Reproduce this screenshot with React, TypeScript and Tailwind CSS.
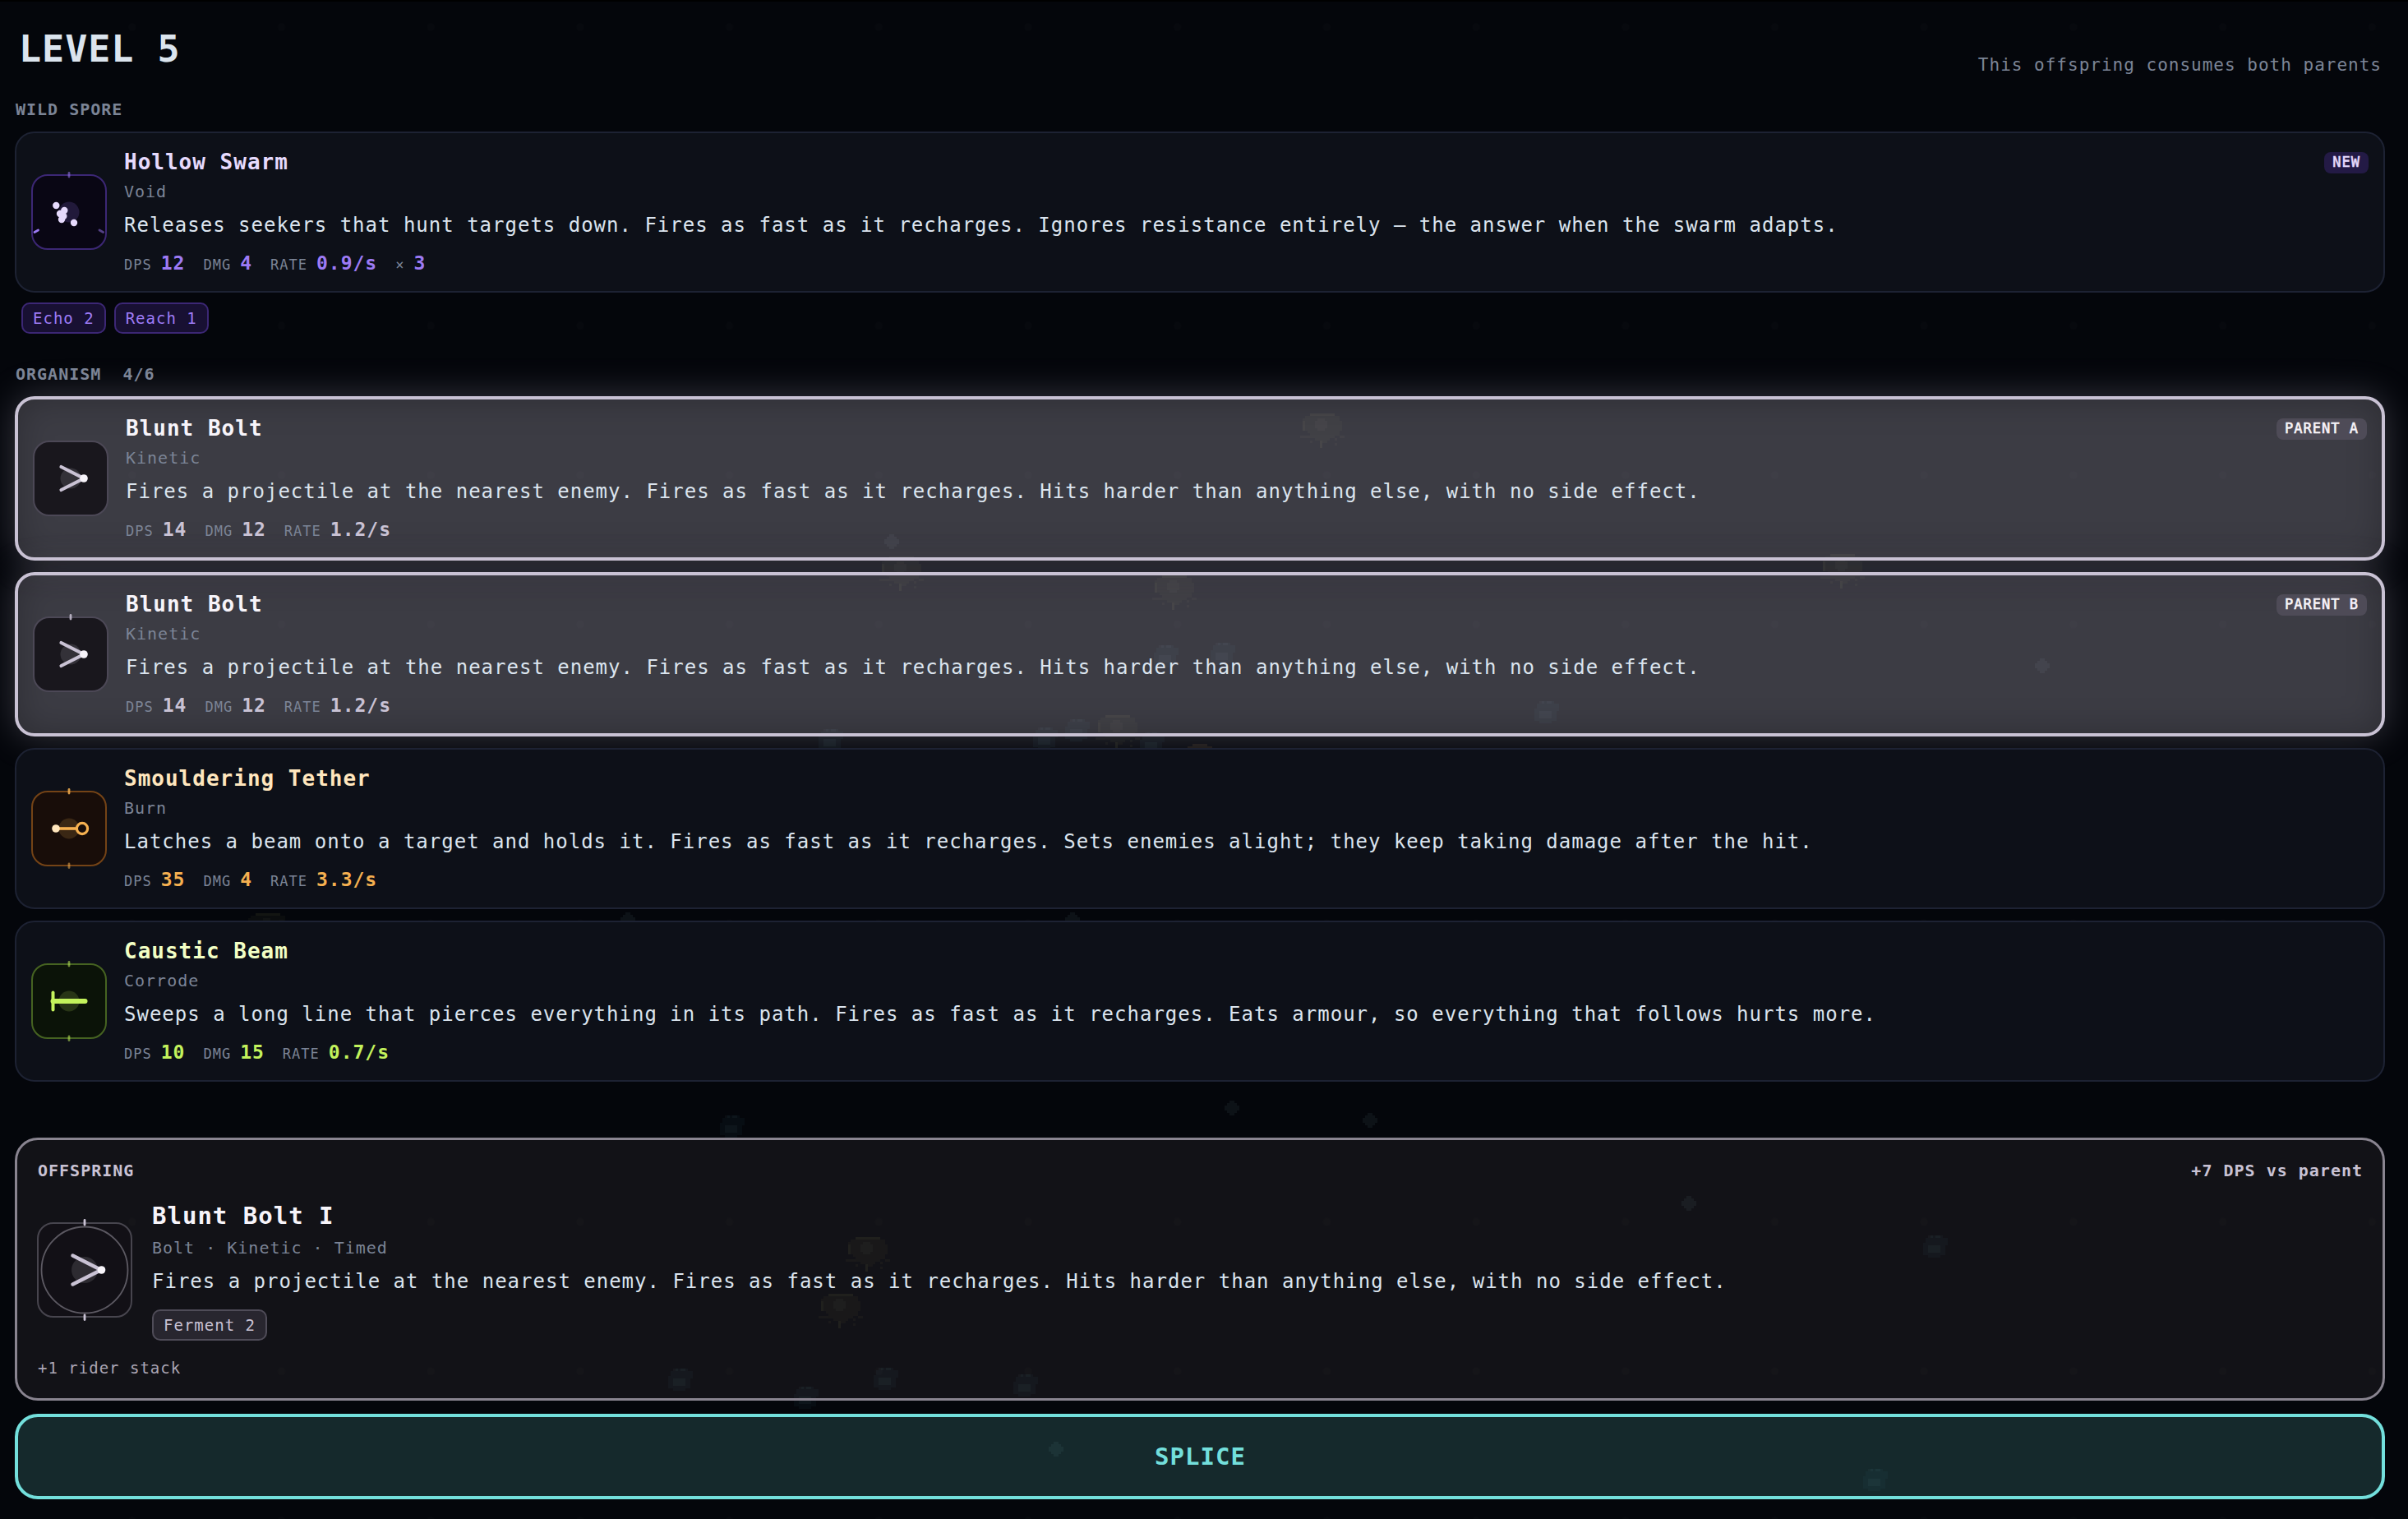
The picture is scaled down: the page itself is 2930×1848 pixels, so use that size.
import type { ReactNode } from "react"
import clsx from "clsx"

type Theme = "void" | "kinetic" | "burn" | "corrode"

interface Stat {
  label: string
  value: string
}

interface Cell {
  name: string
  theme: Theme
  element: string
  text: string
  stats: Stat[]
  badge?: string
  selected?: boolean
  ticks?: number
}

const themes: Record<Theme, { title: string; value: string; badge: string; edge: string; fill: string; core: string; bright: string; main: string }> = {
  void: {
    title: "text-[#e6dafd]",
    value: "text-[#9d7bf5]",
    badge: "bg-[#231a45] text-[#e6dafd]",
    edge: "#3c2775",
    fill: "#090614",
    core: "#21193a",
    bright: "#e6dafd",
    main: "#9d7bf5",
  },
  kinetic: {
    title: "text-[#f7f4fa]",
    value: "text-[#c9c2d4]",
    badge: "bg-[#4e4b57] text-[#f7f4fa]",
    edge: "#4c4856",
    fill: "#19171d",
    core: "#333138",
    bright: "#f7f4fa",
    main: "#c9c2d4",
  },
  burn: {
    title: "text-[#ffe6bd]",
    value: "text-[#f5b050]",
    badge: "bg-[#3b2714] text-[#ffe6bd]",
    edge: "#744316",
    fill: "#180d09",
    core: "#3a2714",
    bright: "#ffe6bd",
    main: "#f5b050",
  },
  corrode: {
    title: "text-[#f2ffc4]",
    value: "text-[#c3f25c]",
    badge: "bg-[#28351a] text-[#f2ffc4]",
    edge: "#466321",
    fill: "#0b1308",
    core: "#283516",
    bright: "#f2ffc4",
    main: "#c3f25c",
  },
}

const wildSpore: Cell = {
  name: "Hollow Swarm",
  theme: "void",
  element: "Void",
  text: "Releases seekers that hunt targets down. Fires as fast as it recharges. Ignores resistance entirely — the answer when the swarm adapts.",
  stats: [
    { label: "DPS", value: "12" },
    { label: "DMG", value: "4" },
    { label: "RATE", value: "0.9/s" },
    { label: "×", value: "3" },
  ],
  badge: "NEW",
}

const boltText =
  "Fires a projectile at the nearest enemy. Fires as fast as it recharges. Hits harder than anything else, with no side effect."

const boltStats: Stat[] = [
  { label: "DPS", value: "14" },
  { label: "DMG", value: "12" },
  { label: "RATE", value: "1.2/s" },
]

const organism: Cell[] = [
  { name: "Blunt Bolt", theme: "kinetic", element: "Kinetic", text: boltText, stats: boltStats, badge: "PARENT A", selected: true, ticks: 0 },
  { name: "Blunt Bolt", theme: "kinetic", element: "Kinetic", text: boltText, stats: boltStats, badge: "PARENT B", selected: true, ticks: 1 },
  {
    name: "Smouldering Tether",
    theme: "burn",
    element: "Burn",
    text: "Latches a beam onto a target and holds it. Fires as fast as it recharges. Sets enemies alight; they keep taking damage after the hit.",
    stats: [
      { label: "DPS", value: "35" },
      { label: "DMG", value: "4" },
      { label: "RATE", value: "3.3/s" },
    ],
    ticks: 2,
  },
  {
    name: "Caustic Beam",
    theme: "corrode",
    element: "Corrode",
    text: "Sweeps a long line that pierces everything in its path. Fires as fast as it recharges. Eats armour, so everything that follows hurts more.",
    stats: [
      { label: "DPS", value: "10" },
      { label: "DMG", value: "15" },
      { label: "RATE", value: "0.7/s" },
    ],
    ticks: 2,
  },
]

// dim creatures drifting on the playfield behind the overlay: x, y, kind
const creatures: [number, number, string][] = [
  [1609, 517, "jelly"],
  [1097, 691, "jelly"],
  [1429, 714, "jelly"],
  [2242, 688, "jelly"],
  [1360, 884, "jelly"],
  [1056, 1519, "jelly"],
  [1023, 1588, "jelly"],
  [326, 1125, "jelly"],
  [1460, 915, "ember"],
  [1419, 798, "mite"],
  [1488, 795, "mite"],
  [1011, 900, "mite"],
  [1272, 898, "mite"],
  [1311, 888, "mite"],
  [1402, 904, "mite"],
  [1882, 866, "mite"],
  [891, 1370, "mite"],
  [2355, 1516, "mite"],
  [1078, 1677, "mite"],
  [828, 1678, "mite"],
  [1248, 1685, "mite"],
  [981, 1700, "mite"],
  [2282, 1800, "mite"],
  [2485, 808, "gem"],
  [1085, 657, "gem"],
  [764, 1117, "gem"],
  [1305, 1117, "gem"],
  [1499, 1346, "gem"],
  [1667, 1361, "gem"],
  [2055, 1462, "gem"],
  [1285, 1761, "gem"],
]

function Playfield() {
  return (
    <svg className="pointer-events-none absolute inset-0 h-full w-full" aria-hidden="true">
      <defs>
        <pattern id="grid" x="70" y="-60" width="181.7" height="181.7" patternUnits="userSpaceOnUse">
          <circle cx="90.85" cy="90.85" r="4.5" fill="#07090e" />
        </pattern>
        <g id="jelly" shapeRendering="crispEdges">
          <path fill="#96a050" opacity=".05" d="M-15-16h30v3h6v6h3v12h-3v6h-6v3h-6v3h-3v3h-6v6h-3v-9h-6v-3h-6v-6h-3v-3h-6v-15h3v-3h6z" />
          <path fill="#96a050" opacity=".06" d="M-15-16h30v3h-30zM-24-7h3v12h-3zM-27 11h12v3h-12zM21 11h6v3h-6zM-15 17h3v3h-3zM-3 17h3v9h-3zM15 14h3v3h-3zM15 20h3v3h-3z" />
          <path fill="#b4aaa0" opacity=".04" d="M-6-10h9v3h3v9h-3v3h-9v-3h-3v-9h3z" />
        </g>
        <path id="ember" fill="#b48c50" opacity=".11" shapeRendering="crispEdges" d="M-9-12h18v3h6v6h3v9h-36v-9h3v-6h6z" />
        <g id="mite" shapeRendering="crispEdges">
          <path fill="#3c7884" opacity=".07" d="M-6-15h15v3h6v9h-3v12h-6v3h-15v-3h-6v-15h3v-6h6z" />
          <path fill="#8cb4b4" opacity=".05" d="M-9-3h15v9h-15zM-9-15h6v3h-6zM0-15h6v3h-6z" />
        </g>
        <path id="gem" fill="#6a9090" opacity=".09" shapeRendering="crispEdges" d="M-3-9h6v3h3v3h3v6h-3v3h-3v3h-6v-3h-3v-3h-3v-6h3v-3h3z" />
      </defs>
      <rect width="100%" height="100%" fill="url(#grid)" />
      {creatures.map(([x, y, kind]) => (
        <use key={`${x}-${y}`} href={`#${kind}`} x={x} y={y} />
      ))}
    </svg>
  )
}

function GlyphShape({ theme }: { theme: Theme }) {
  const { main, bright, fill } = themes[theme]

  if (theme === "void") {
    return (
      <g fill={bright}>
        <circle cx="30.3" cy="38" r="4.2" />
        <circle cx="40.3" cy="44" r="4.2" />
        <circle cx="35" cy="48" r="4.2" />
        <circle cx="39.3" cy="51" r="4.2" />
        <circle cx="37" cy="55" r="4.2" />
        <circle cx="52" cy="59" r="4.2" />
      </g>
    )
  }
  if (theme === "kinetic") {
    return (
      <>
        <path d="M34.5 32 62 46 34.5 60" fill="none" stroke={main} strokeWidth="4.2" strokeLinecap="round" />
        <circle cx="62" cy="46" r="4.8" fill={bright} />
      </>
    )
  }
  if (theme === "burn") {
    return (
      <>
        <path d="M30 46h27" stroke={main} strokeWidth="3.6" />
        <circle cx="30" cy="46" r="4.8" fill={bright} />
        <circle cx="62" cy="46" r="6.6" fill={fill} stroke={main} strokeWidth="3.2" />
      </>
    )
  }
  return (
    <g stroke={main} strokeLinecap="round">
      <path d="M26.5 46h39" strokeWidth="6" />
      <path d="M26.5 35.5v21" strokeWidth="4" />
    </g>
  )
}

function Glyph({ theme, ticks }: { theme: Theme; ticks?: number }) {
  const { edge, fill, core, main } = themes[theme]
  return (
    <svg viewBox="0 0 92 92" className="size-[92px] shrink-0 overflow-visible">
      <rect x="1" y="1" width="90" height="90" rx="19" fill={fill} stroke={edge} strokeWidth="2" />
      <circle cx="46" cy="46" r="12.5" fill={core} />
      <GlyphShape theme={theme} />
      <g stroke={main} strokeWidth="2.8" strokeLinecap="round">
        {theme === "void" && (
          <>
            <path d="M46-1.5v4.5" opacity=".55" />
            <path d="m4 70.5 4.5-2.5" />
            <path d="m83 68 4.5 2.5" opacity=".5" />
          </>
        )}
        {theme !== "void" && !!ticks && <path d="M46-1.5v4.5" opacity={theme === "corrode" ? 0.55 : 0.85} />}
        {ticks === 2 && <path d="M46 89v4.5" opacity=".55" />}
      </g>
    </svg>
  )
}

function OffspringGlyph() {
  return (
    <svg viewBox="0 0 116 116" className="mt-[26px] size-[116px] shrink-0 overflow-visible">
      <rect x="1" y="1" width="114" height="114" rx="19" fill="#121016" stroke="#47454e" strokeWidth="2" />
      <circle cx="58" cy="58" r="52.5" fill="none" stroke="#5c5962" strokeWidth="1.8" />
      <circle cx="58" cy="58" r="16" fill="#2d2b31" />
      <path d="M43.5 40.5 78 58 43.5 75.5" fill="none" stroke="#c9c2d4" strokeWidth="4.5" strokeLinecap="round" />
      <circle cx="78.5" cy="58" r="4.8" fill="#f7f4fa" />
      <path d="M58-2.5v5.5M58 113v5.5" stroke="#c9c2d4" strokeWidth="2.8" strokeLinecap="round" />
    </svg>
  )
}

function SectionLabel({ children }: { children: ReactNode }) {
  return <div className="pl-px text-[20px] leading-[24px] font-bold whitespace-pre text-[#7b8496]">{children}</div>
}

function Tag({ theme, children }: { theme: "void" | "kinetic"; children: ReactNode }) {
  return (
    <span
      className={clsx(
        "rounded-[10px] border-2 px-3 text-[19px] leading-[34px]",
        theme === "void" ? "border-[#3c2775] bg-[#181033] text-[#9d7bf5]" : "border-[#4f4c58] bg-[#28262f] text-[#c9c2d4]",
      )}
    >
      {children}
    </span>
  )
}

function CellCard({ cell }: { cell: Cell }) {
  const theme = themes[cell.theme]
  return (
    <div
      className={clsx(
        "flex items-center gap-[21px] rounded-[24px] px-[18px] pt-[18px] pb-[19px]",
        cell.selected
          ? "border-4 border-[#c9c2d4] bg-[#c9c0d2]/29 shadow-[0_0_44px_rgba(201,194,212,0.26),inset_0_0_40px_rgba(0,0,0,0.26)]"
          : "border-2 border-[#1d2233] bg-[#0d1018]",
      )}
    >
      <Glyph theme={cell.theme} ticks={cell.ticks} />
      <div className="min-w-0 flex-1">
        <div className="flex items-start justify-between">
          <div className={clsx("text-[26px] leading-[34px] font-bold", theme.title)}>{cell.name}</div>
          {cell.badge && (
            <span
              className={clsx(
                "mt-[5px] rounded-lg px-2.5 pb-0.5 text-[17px] leading-[24px] [-webkit-text-stroke:0.6px_currentColor]",
                theme.badge,
              )}
            >
              {cell.badge}
            </span>
          )}
        </div>
        <div className="mt-[5px] text-[20px] leading-[28px] text-[#7b8496]">{cell.element}</div>
        <div className="mt-2.5 text-[24px] leading-[34px] text-[#dbe4ee]">{cell.text}</div>
        <div className="mt-3.5 flex h-[30px] gap-[22px]">
          {cell.stats.map((stat) => (
            <span key={stat.label} className="flex items-baseline gap-[11px] leading-[30px]">
              <span className="text-[17px] text-[#7b8496]">{stat.label}</span>
              <span className={clsx("text-[23px] font-bold", theme.value)}>{stat.value}</span>
            </span>
          ))}
        </div>
      </div>
    </div>
  )
}

function Offspring() {
  return (
    <div className="h-[320px] rounded-[28px] border-3 border-[#898490] bg-[#bea0a5]/8 px-6 pt-[25px]">
      <div className="flex justify-between pl-px text-[20px] leading-[24px] font-bold text-[#c9c2d4]">
        <span>OFFSPRING</span>
        <span>+7 DPS vs parent</span>
      </div>
      <div className="mt-[25px] flex items-start gap-6">
        <OffspringGlyph />
        <div>
          <div className="text-[29px] leading-[36px] font-bold text-[#f7f4fa]">Blunt Bolt I</div>
          <div className="mt-[7px] text-[20px] leading-[28px] text-[#7b8496]">Bolt · Kinetic · Timed</div>
          <div className="mt-2.5 text-[24px] leading-[34px] text-[#dbe4ee]">{boltText}</div>
          <div className="mt-[17px] flex">
            <Tag theme="kinetic">Ferment 2</Tag>
          </div>
        </div>
      </div>
      <div className="mt-[21px] pl-px text-[19px] leading-[24px] text-[#aaa5b4]">+1 rider stack</div>
    </div>
  )
}

export default function App() {
  return (
    <div className="relative h-[1848px] w-[2930px] overflow-hidden border-t-2 border-black bg-[#04060b] font-['DejaVu_Sans_Mono',monospace] tracking-[1px]">
      <Playfield />
      <main className="relative flex w-[2902px] flex-col pl-[18px]">
        <header className="flex h-[86px] items-end justify-between pt-[31px] pr-1 pl-[5px]">
          <h1 className="self-start text-[45px] leading-[54px] font-bold text-[#dbe4ee]">LEVEL 5</h1>
          <p className="h-[22px] text-[21px] leading-[26px] text-[#7b8496]">This offspring consumes both parents</p>
        </header>

        <div className="mt-[33px]">
          <SectionLabel>WILD SPORE</SectionLabel>
        </div>
        <div className="mt-[15px]">
          <CellCard cell={wildSpore} />
        </div>
        <div className="mt-3 flex gap-2.5 pl-2">
          <Tag theme="void">Echo 2</Tag>
          <Tag theme="void">Reach 1</Tag>
        </div>

        <div className="mt-[37px]">
          <SectionLabel>{"ORGANISM  4/6"}</SectionLabel>
        </div>
        <div className="mt-[15px] flex flex-col gap-3.5">
          {organism.map((cell, i) => (
            <CellCard key={i} cell={cell} />
          ))}
        </div>

        <div className="mt-[68px]">
          <Offspring />
        </div>
        <button className="mt-4 h-[104px] rounded-[28px] border-4 border-[#73dfdc] bg-[#73dfdc]/16 pt-0.5 pl-px text-[29px] font-bold text-[#73dfdc]">
          SPLICE
        </button>
      </main>
    </div>
  )
}
